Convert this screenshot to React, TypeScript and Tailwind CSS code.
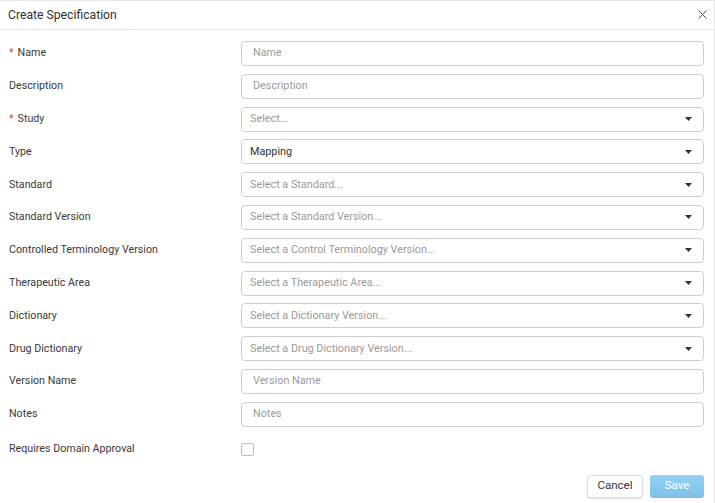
import { X } from "lucide-react";

type Field = { label: string; kind: "text" | "select"; placeholder: string; value?: string; required?: boolean };

const FIELDS: Field[] = [
  { label: "Name", kind: "text", placeholder: "Name", required: true },
  { label: "Description", kind: "text", placeholder: "Description" },
  { label: "Study", kind: "select", placeholder: "Select...", required: true },
  { label: "Type", kind: "select", placeholder: "", value: "Mapping" },
  { label: "Standard", kind: "select", placeholder: "Select a Standard..." },
  { label: "Standard Version", kind: "select", placeholder: "Select a Standard Version..." },
  { label: "Controlled Terminology Version", kind: "select", placeholder: "Select a Control Terminology Version..." },
  { label: "Therapeutic Area", kind: "select", placeholder: "Select a Therapeutic Area..." },
  { label: "Dictionary", kind: "select", placeholder: "Select a Dictionary Version..." },
  { label: "Drug Dictionary", kind: "select", placeholder: "Select a Drug Dictionary Version..." },
  { label: "Version Name", kind: "text", placeholder: "Version Name" },
  { label: "Notes", kind: "text", placeholder: "Notes" },
];

export default function App() {
  return (
    <div
      className="h-[503px] w-[715px] overflow-hidden border-t border-r border-[#e6e6e6] bg-white text-[#333]"
      style={{ fontFamily: "Roboto, 'Liberation Sans', sans-serif" }}
    >
      <div className="flex h-[29px] items-center justify-between border-b border-[#e5e5e5] pl-[8px] pr-[4px]">
        <h1 className="text-[12.2px] font-normal text-[#333]">Create Specification</h1>
        <X className="mb-[2px] h-[15px] w-[15px] text-[#555]" strokeWidth={1.6} />
      </div>

      <div className="pl-[9px] pr-[10px] pt-[11px]">
        <div className="flex flex-col gap-[7.8px]">
          {FIELDS.map((f) => (
            <div key={f.label} className="flex h-[25px] items-center">
              <div className="w-[232px] shrink-0 text-[10.7px] text-[#3a3a3a]">
                {f.required && <span className="mr-[4px] text-[#e0443a]">*</span>}
                {f.label}
              </div>
              {f.kind === "text" ? (
                <div className="flex h-[25px] flex-1 items-center rounded-[4px] border border-[#cfcfcf] px-[11px] text-[10.8px] text-[#9a9a9a]">
                  {f.placeholder}
                </div>
              ) : (
                <div className="flex h-[25px] flex-1 items-center justify-between rounded-[4px] border border-[#cfcfcf] pl-[8px] pr-[11px] text-[10.8px]">
                  <span className={f.value ? "text-[#333]" : "text-[#9a9a9a]"}>{f.value ?? f.placeholder}</span>
                  <svg width="7" height="4" viewBox="0 0 7 4" className="text-[#333]">
                    <path d="M0 0h7L3.5 4z" fill="currentColor" />
                  </svg>
                </div>
              )}
            </div>
          ))}
          <div className="mt-[2px] flex h-[25px] items-center">
            <div className="w-[232px] shrink-0 text-[10.7px] text-[#3a3a3a]">Requires Domain Approval</div>
            <div className="h-[13px] w-[13px] rounded-[2px] border border-[#bdbdbd] bg-white" />
          </div>
        </div>

        <div className="mt-[13px] flex justify-end gap-[7px]">
          <button className="h-[23px] w-[56px] rounded-[3px] border border-[#dcdcdc] bg-white text-[11.5px] text-[#333] shadow-[0_1px_2px_rgba(0,0,0,0.12)]">
            Cancel
          </button>
          <button className="h-[23px] w-[54px] rounded-[3px] bg-gradient-to-b from-[#92d2f6] to-[#7fc0e8] text-[11.5px] text-white">
            Save
          </button>
        </div>
      </div>
    </div>
  );
}
